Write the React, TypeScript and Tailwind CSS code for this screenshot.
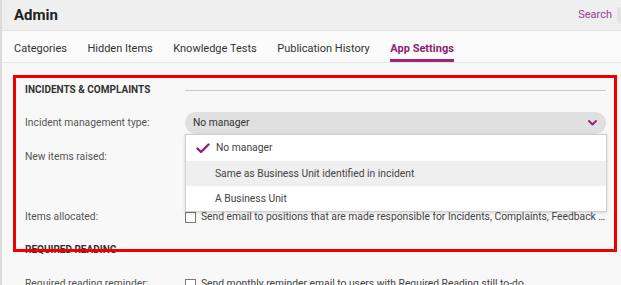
import React from 'react';

const tabs = ['Categories', 'Hidden Items', 'Knowledge Tests', 'Publication History', 'App Settings'];

function Check() {
  return (
    <svg width="14" height="11" viewBox="0 0 14 11" className="shrink-0">
      <path d="M1.5 5.5 L5 9 L12.5 1.5" fill="none" stroke="#8a2373" strokeWidth="2.4" strokeLinecap="round" strokeLinejoin="round" />
    </svg>
  );
}

function Chevron() {
  return (
    <svg width="9" height="6" viewBox="0 0 9 6">
      <path d="M1 1 L4.5 4.5 L8 1" fill="none" stroke="#8a2373" strokeWidth="1.8" strokeLinecap="round" strokeLinejoin="round" />
    </svg>
  );
}

function Box() {
  return <div className="w-[11px] h-[11px] border border-[#777] bg-white shrink-0" />;
}

export default function App() {
  return (
    <div className="relative w-[621px] h-[285px] overflow-hidden bg-[#f8f8f8] text-[#444] font-['Roboto','Liberation_Sans',sans-serif] border-l-2 border-[#dcdcdc]">
      {/* header */}
      <div className="h-[31px] bg-[#efefef] border-b border-[#e2e2e2] flex items-center justify-between pl-[12px]">
        <div className="text-[15px] font-bold text-[#222] pt-[1px]">Admin</div>
        <div className="flex items-center gap-[5px]">
          <span className="text-[11px] text-[#9a3b8c] pt-[1px]">Search</span>
          <div className="w-[4px] h-[16px] rounded-l-full bg-[#e2e2e2]" />
        </div>
      </div>

      {/* tabs */}
      <div className="h-[32px] bg-[#fbfbfb] border-b border-[#e4e4e4] flex gap-[20.5px] pl-[12px]">
        {tabs.map((t) => (
          <div
            key={t}
            className={
              t === 'App Settings'
                ? 'h-full flex items-center pt-[8px] border-b-[3px] border-[#a0247f] text-[11px] font-bold text-[#8e1e74]'
                : 'h-full flex items-center pt-[8px] border-b-[3px] border-transparent text-[11px] text-[#333]'
            }
          >
            {t}
          </div>
        ))}
      </div>

      {/* settings */}
      <div className="flex flex-col pl-[23px] pr-[15px] pt-[18px] text-[10.3px]">
        <div className="h-[16px] flex items-center">
          <div className="w-[160px] font-bold text-[#333] text-[10px]">INCIDENTS &amp; COMPLAINTS</div>
          <div className="flex-1 h-px bg-[#c8c8c8] mt-[2px]" />
        </div>

        <div className="mt-[15px] h-[22px] flex items-center">
          <div className="w-[160px] text-[#555]">Incident management type:</div>
          <div className="relative flex-1 h-full">
            <div className="h-full rounded-full bg-[#e0e0e0] flex items-center justify-between pl-[8px] pr-[9px] text-[#333]">
              <span>No manager</span>
              <Chevron />
            </div>
            <div className="absolute left-0 right-[-1px] top-full bg-white border border-[#cfcfcf] shadow-[0_1px_3px_rgba(0,0,0,0.15)] z-10 text-[#444]">
              <div className="h-[26px] flex items-center pl-[10px] gap-[6px]">
                <Check />
                <span>No manager</span>
              </div>
              <div className="h-[25px] flex items-center pl-[29px] bg-[#efefef]">Same as Business Unit identified in incident</div>
              <div className="h-[25px] flex items-center pl-[29px]">A Business Unit</div>
            </div>
          </div>
        </div>

        <div className="mt-[12px] h-[60px] flex items-start">
          <div className="w-[160px] h-[22px] flex items-center text-[#555]">New items raised:</div>
        </div>

        <div className="h-[22px] flex items-center">
          <div className="w-[160px] text-[#555]">Items allocated:</div>
          <div className="flex-1 min-w-0 flex items-center gap-[5px]">
            <Box />
            <span className="truncate">Send email to positions that are made responsible for Incidents, Complaints, Feedback and Hazards</span>
          </div>
        </div>

        <div className="mt-[13px] h-[16px] flex items-center">
          <div className="w-[160px] font-bold text-[#333] text-[10px]">REQUIRED READING</div>
          <div className="flex-1 h-px bg-[#c8c8c8] mt-[2px]" />
        </div>

        <div className="mt-[16px] h-[22px] flex items-center">
          <div className="w-[160px] text-[#555]">Required reading reminder:</div>
          <div className="flex-1 min-w-0 flex items-center gap-[5px]">
            <Box />
            <span className="truncate">Send monthly reminder email to users with Required Reading still to-do</span>
          </div>
        </div>
      </div>

      {/* annotation */}
      <div className="absolute left-[11px] top-[75px] w-[604px] h-[177px] border-[3px] border-[#ee0000] z-20 pointer-events-none" />
    </div>
  );
}
